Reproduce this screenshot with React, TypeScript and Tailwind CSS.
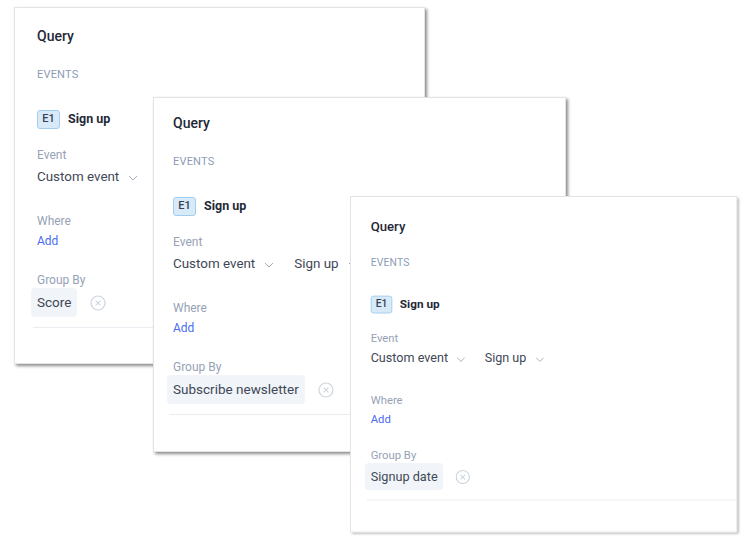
import React from 'react';

interface QueryCardProps {
  /** 位置・サイズ */
  className: string;
  /** 内側の余白 */
  padClassName: string;
  /** Group By の値 */
  groupBy: string;
}

const Chevron = () => (
  <svg width="10" height="6" viewBox="0 0 10 6" fill="none" className="ml-[9px] mt-[1px]">
    <polyline points="1,1 5,5 9,1" stroke="#a3acb9" strokeWidth="1" fill="none" />
  </svg>
);

const ClearIcon = () => (
  <svg width="16" height="16" viewBox="0 0 16 16" fill="none">
    <circle cx="8" cy="8" r="7" stroke="#cdd5df" strokeWidth="1.2" />
    <path d="M5.6 5.6 L10.4 10.4 M10.4 5.6 L5.6 10.4" stroke="#cdd5df" strokeWidth="1.1" />
  </svg>
);

const QueryCard: React.FC<QueryCardProps> = ({ className, padClassName, groupBy }) => {
  return (
    <div
      className={`absolute bg-white border border-[#e4e4e4] shadow-[2px_2px_3px_rgba(0,0,0,0.45)] flex flex-col ${className} ${padClassName}`}
    >
      <div className="text-[14px] leading-[20px] font-medium text-[#1f2937]">Query</div>
      <div className="mt-[21px] text-[11px] leading-[16px] text-[#8d9cb6] tracking-[0.2px]">EVENTS</div>

      {/* イベント行 */}
      <div className="mt-[27px] flex items-center h-[19px]">
        <div className="w-[23px] h-[19px] rounded-[3px] bg-[#d8eaf8] border border-[#a3cdee] flex items-center justify-center text-[11px] font-medium text-[#374151]">
          E1
        </div>
        <div className="ml-[8px] text-[12.5px] font-bold text-[#1f2937]">Sign up</div>
      </div>

      <div className="mt-[18px] text-[12px] leading-[16px] text-[#96a2b6]">Event</div>
      <div className="mt-[4px] flex items-center h-[20px] text-[13.4px] text-[#3f4856] whitespace-nowrap">
        <span>Custom event</span>
        <Chevron />
        <span className="ml-[20px]">Sign up</span>
        <Chevron />
      </div>

      <div className="mt-[26px] text-[12px] leading-[16px] text-[#96a2b6]">Where</div>
      <div className="mt-[4px] text-[12px] leading-[16px] text-[#4a6cf0]">Add</div>

      <div className="mt-[23px] text-[12px] leading-[16px] text-[#96a2b6]">Group By</div>
      <div className="flex items-center">
        <div className="ml-[-6px] h-[29px] px-[6px] rounded-[4px] bg-[#f1f4f8] flex items-center text-[13.5px] text-[#3f4856] whitespace-nowrap">
          {groupBy}
        </div>
        <div className="ml-[13px]">
          <ClearIcon />
        </div>
      </div>

      <div className="mt-[10px] ml-[-4px] h-px bg-[#e9edf2]" />
    </div>
  );
};

export default function App() {
  return (
    <div className="relative w-[744px] h-[544px] bg-white overflow-hidden font-['Roboto',sans-serif]">
      <QueryCard
        className="left-[14px] top-[7px] w-[411px] h-[357px]"
        padClassName="pl-[22px] pt-[18px]"
        groupBy="Score"
      />
      <QueryCard
        className="left-[153px] top-[97px] w-[413px] h-[355px]"
        padClassName="pl-[19px] pt-[15px]"
        groupBy="Subscribe newsletter"
      />
      <QueryCard
        className="left-[350px] top-[196px] w-[412px] h-[358px] scale-[0.94] origin-top-left"
        padClassName="pl-[21px] pt-[21px]"
        groupBy="Signup date"
      />
    </div>
  );
}
